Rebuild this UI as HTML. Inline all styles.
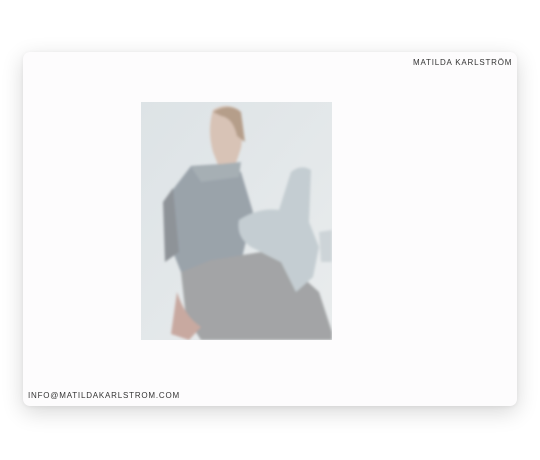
<!DOCTYPE html>
<html><head><style>
html,body{margin:0;padding:0;width:540px;height:460px;background:#fff;overflow:hidden}
.card{position:absolute;left:23px;top:52px;width:494px;height:354px;background:#fdfcfd;border-radius:7px;box-shadow:0 6px 22px rgba(0,0,0,.16),0 1px 4px rgba(0,0,0,.06)}
.t{position:absolute;font-family:"Liberation Sans",sans-serif;font-size:8px;letter-spacing:0.8px;color:#333}
.img{position:absolute;left:141px;top:102px;width:191px;height:238px}
</style></head><body>
<div class="card"></div>
<div class="t" style="left:413px;top:58px">MATILDA KARLSTRÖM</div>
<div class="t" style="left:28px;top:391px">INFO@MATILDAKARLSTROM.COM</div>
<svg class="img" viewBox="0 0 191 238" preserveAspectRatio="none">
<defs><linearGradient id="bg" x1="0" y1="0" x2="1" y2="1"><stop offset="0" stop-color="#dde3e6"/><stop offset="1" stop-color="#e9eced"/></linearGradient>
<filter id="b"><feGaussianBlur stdDeviation="1.2"/></filter></defs>
<rect width="191" height="238" fill="url(#bg)"/>
<g filter="url(#b)">
<path d="M72 8 Q85 0 98 8 Q104 22 100 46 L92 70 L80 70 L72 50 Q66 28 72 8Z" fill="#d8c3b6"/>
<path d="M72 10 Q88 0 100 10 L104 40 L96 34 Q92 16 80 14 Z" fill="#b59e8a"/>
<path d="M30 90 L50 64 L80 62 L100 70 L112 110 L100 160 L60 175 L40 170 L28 140 Z" fill="#9aa3aa"/>
<path d="M22 100 L32 86 L38 150 L24 160 Z" fill="#8e9398"/>
<path d="M40 170 L70 158 L120 150 L150 165 L178 190 L191 230 L191 238 L60 238 L45 215 Z" fill="#a3a4a6"/>
<path d="M98 118 Q118 105 138 108 L150 70 Q160 62 170 68 L168 120 L178 145 L172 175 L155 190 L140 160 L110 145 Q95 135 98 118Z" fill="#c4cdd2"/>
<path d="M178 130 L191 128 L191 160 L180 160Z" fill="#cdd4d8"/>
<path d="M36 190 Q44 215 60 225 L48 238 L30 232 Z" fill="#c8a9a0"/>
<path d="M50 65 L100 60 L98 75 L60 80Z" fill="#a6afb4"/>
</g>
</svg>
</body></html>
